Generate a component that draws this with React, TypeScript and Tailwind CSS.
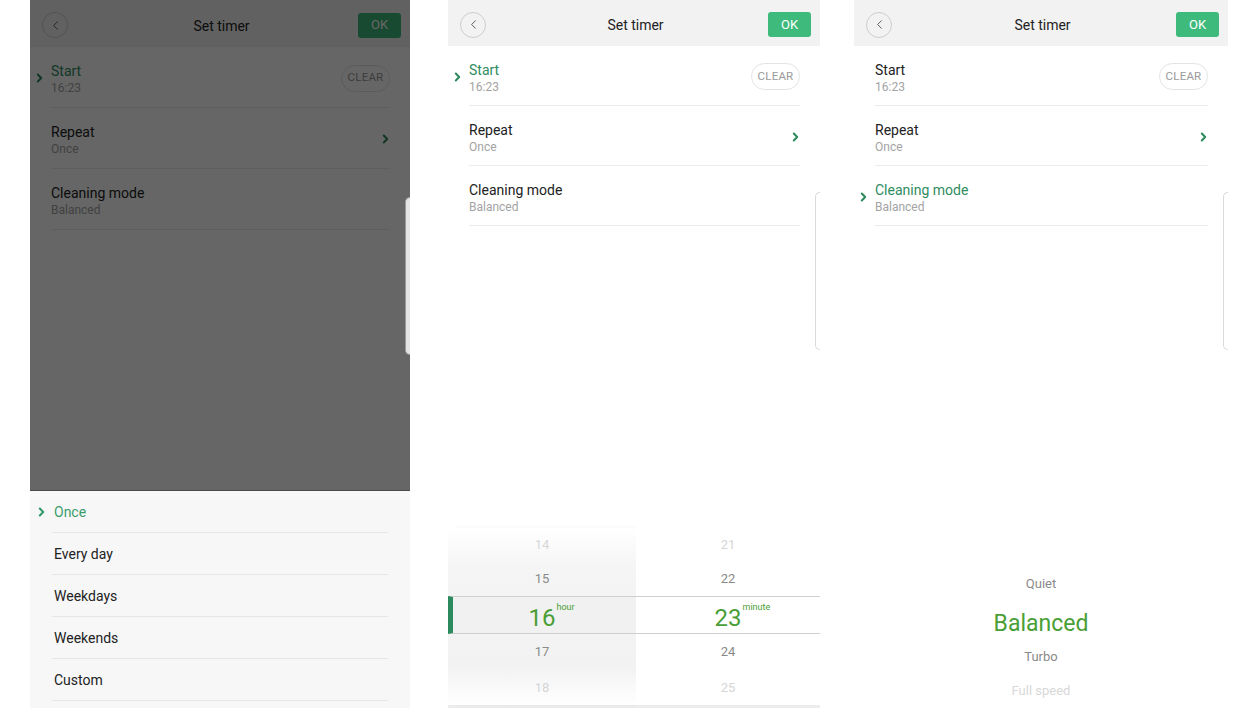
import { ChevronLeft } from "lucide-react";

type RowProps = {
  label: string;
  sub: string;
  active?: boolean;
  right?: "clear" | "chevron";
  tall?: boolean;
};

function Chevron({ className = "" }: { className?: string }) {
  return (
    <svg width="7" height="10" viewBox="0 0 7 10" className={className}>
      <path
        d="M1.8 1.5 5.2 5 1.8 8.5"
        fill="none"
        stroke="currentColor"
        strokeWidth="2"
        strokeLinecap="round"
        strokeLinejoin="round"
      />
    </svg>
  );
}

function Header({ tall }: { tall?: boolean }) {
  return (
    <div
      className={`grid shrink-0 grid-cols-[1fr_auto_1fr] items-center bg-[#f2f2f2] pl-[12px] pr-[9px] pt-[3px] ${
        tall ? "h-[47px]" : "h-[46px]"
      }`}
    >
      <div className="flex">
        <button className="flex size-[26px] items-center justify-center rounded-full border border-[#cdcdcd] text-[#555]">
          <ChevronLeft size={15} strokeWidth={1.5} />
        </button>
      </div>
      <span className="pt-[2px] text-[14px] text-[#222]">Set timer</span>
      <div className="flex justify-end">
        <button className="h-[25px] w-[43px] rounded-[3px] bg-[#3dba7c] text-[13px] text-white">OK</button>
      </div>
    </div>
  );
}

function Row({ label, sub, active, right, tall }: RowProps) {
  return (
    <div
      className={`relative flex items-center justify-between border-b border-[#ececec] pt-[4px] ${
        tall ? "h-[61px]" : "h-[60px]"
      }`}
    >
      {active && <Chevron className="absolute -left-[15px] top-[26px] text-[#2a8a5c]" />}
      <div className="flex flex-col">
        <span className={`text-[14px] leading-[18px] ${active ? "text-[#2f8c5f]" : "text-[#222]"}`}>{label}</span>
        <span className="text-[12px] leading-[16px] text-[#a3a3a3]">{sub}</span>
      </div>
      {right === "clear" && (
        <span className="-mt-[2px] flex h-[27px] w-[49px] items-center justify-center rounded-full border border-[#e3e3e3] text-[11.5px] tracking-[0.2px] text-[#9a9a9a]">
          CLEAR
        </span>
      )}
      {right === "chevron" && <Chevron className="mr-[1px] mt-[-2px] text-[#2a8a5c]" />}
    </div>
  );
}

function Settings({ active, tall }: { active: "start" | "mode"; tall?: boolean }) {
  return (
    <div className="ml-[21px] mr-[20px] flex flex-col">
      <Row label="Start" sub="16:23" active={active === "start"} right="clear" tall={tall} />
      <Row label="Repeat" sub="Once" right="chevron" tall={tall} />
      <Row label="Cleaning mode" sub="Balanced" active={active === "mode"} tall={tall} />
    </div>
  );
}

function Sliver({ top, muted }: { top: string; muted?: boolean }) {
  return (
    <div
      className={`absolute right-0 z-10 h-[158px] w-[5px] rounded-l-[5px] border border-r-0 ${
        muted ? "border-[#9a9a9a] bg-[#e4e4e4]" : "border-[#d9d9d9] bg-white"
      } ${top}`}
    />
  );
}

const repeatOptions = ["Once", "Every day", "Weekdays", "Weekends", "Custom"];

function RepeatSheet() {
  return (
    <div className="flex h-[218px] shrink-0 flex-col border-t border-[#4a4a4a] bg-[#f7f7f7]">
      <div className="ml-[22px] mr-[22px] flex flex-col">
        {repeatOptions.map((opt, i) => (
          <div key={opt} className="relative flex h-[42px] items-center border-b border-[#e6e6e6] pl-[2px] pt-[1px]">
            {i === 0 && <Chevron className="absolute -left-[14px] top-[16px] text-[#2f9866]" />}
            <span className={`text-[14px] ${i === 0 ? "text-[#3a9d6b]" : "text-[#222]"}`}>{opt}</span>
          </div>
        ))}
      </div>
    </div>
  );
}

const cellHeights = ["h-[34px]", "h-[34px]", "h-[38px]", "h-[36px]", "h-[35px]"];

function WheelColumn({ values, unit, shaded }: { values: string[]; unit: string; shaded?: boolean }) {
  return (
    <div
      className={`flex flex-col ${
        shaded
          ? "w-[188px] bg-[linear-gradient(to_bottom,#ffffff_0%,#f5f5f5_22%,#f2f2f2_78%,#ffffff_100%)] shadow-[3px_0_5px_-2px_rgba(0,0,0,0.10)]"
          : "flex-1 bg-white"
      }`}
    >
      {values.map((v, i) => {
        const far = i === 0 || i === 4;
        if (i === 2) {
          return (
            <div
              key={v}
              className={`flex items-center justify-center border-y border-[#cfcfcf] ${cellHeights[i]} ${
                shaded ? "border-l-[5px] border-l-[#2b8a5e] bg-[#f1f1f1] pr-[5px]" : "bg-white"
              }`}
            >
              <span className="relative pt-[6px] text-[24px] leading-none text-[#4a9e36]">
                {v}
                <sup className="absolute left-full top-[3px] ml-[1px] text-[9px] leading-none text-[#4a9e36]">{unit}</sup>
              </span>
            </div>
          );
        }
        return (
          <div key={v} className={`flex items-center justify-center ${cellHeights[i]}`}>
            <span className={`text-[13px] ${far ? "text-[#d6d6d6]" : "text-[#8a8a8a]"}`}>{v}</span>
          </div>
        );
      })}
    </div>
  );
}

function TimePicker() {
  return (
    <div className="flex shrink-0 border-b-[3px] border-[#ececec]">
      <WheelColumn values={["14", "15", "16", "17", "18"]} unit="hour" shaded />
      <WheelColumn values={["21", "22", "23", "24", "25"]} unit="minute" />
    </div>
  );
}

function ModePicker() {
  return (
    <div className="flex shrink-0 flex-col items-center">
      <div className="flex h-[36px] items-center pt-[1px] text-[13px] text-[#8a8a8a]">Quiet</div>
      <div className="flex h-[38px] items-center pt-[6px] text-[23px] leading-none text-[#4a9e36]">Balanced</div>
      <div className="flex h-[35px] items-center text-[13px] text-[#8a8a8a]">Turbo</div>
      <div className="flex h-[34px] items-center text-[13px] text-[#d8d8d8]">Full speed</div>
    </div>
  );
}

export default function App() {
  return (
    <div className="flex h-[708px] w-[1256px] overflow-hidden bg-white pl-[30px] font-['Roboto',sans-serif]">
      {/* dimmed screen with repeat sheet */}
      <div className="relative flex h-full w-[380px] shrink-0 flex-col">
        <div className="relative flex flex-1 flex-col bg-white">
          <Header tall />
          <Settings active="start" tall />
          <div className="absolute inset-0 bg-black/60" />
        </div>
        <Sliver top="top-[197px]" muted />
        <RepeatSheet />
      </div>

      {/* time picker */}
      <div className="relative ml-[38px] flex h-full w-[372px] shrink-0 flex-col bg-white">
        <Header />
        <Settings active="start" />
        <div className="flex-1" />
        <TimePicker />
        <Sliver top="top-[192px]" />
      </div>

      {/* cleaning mode picker */}
      <div className="relative ml-[34px] flex h-full w-[374px] shrink-0 flex-col bg-white">
        <Header />
        <Settings active="mode" />
        <div className="flex-1" />
        <ModePicker />
        <Sliver top="top-[192px]" />
      </div>
    </div>
  );
}
